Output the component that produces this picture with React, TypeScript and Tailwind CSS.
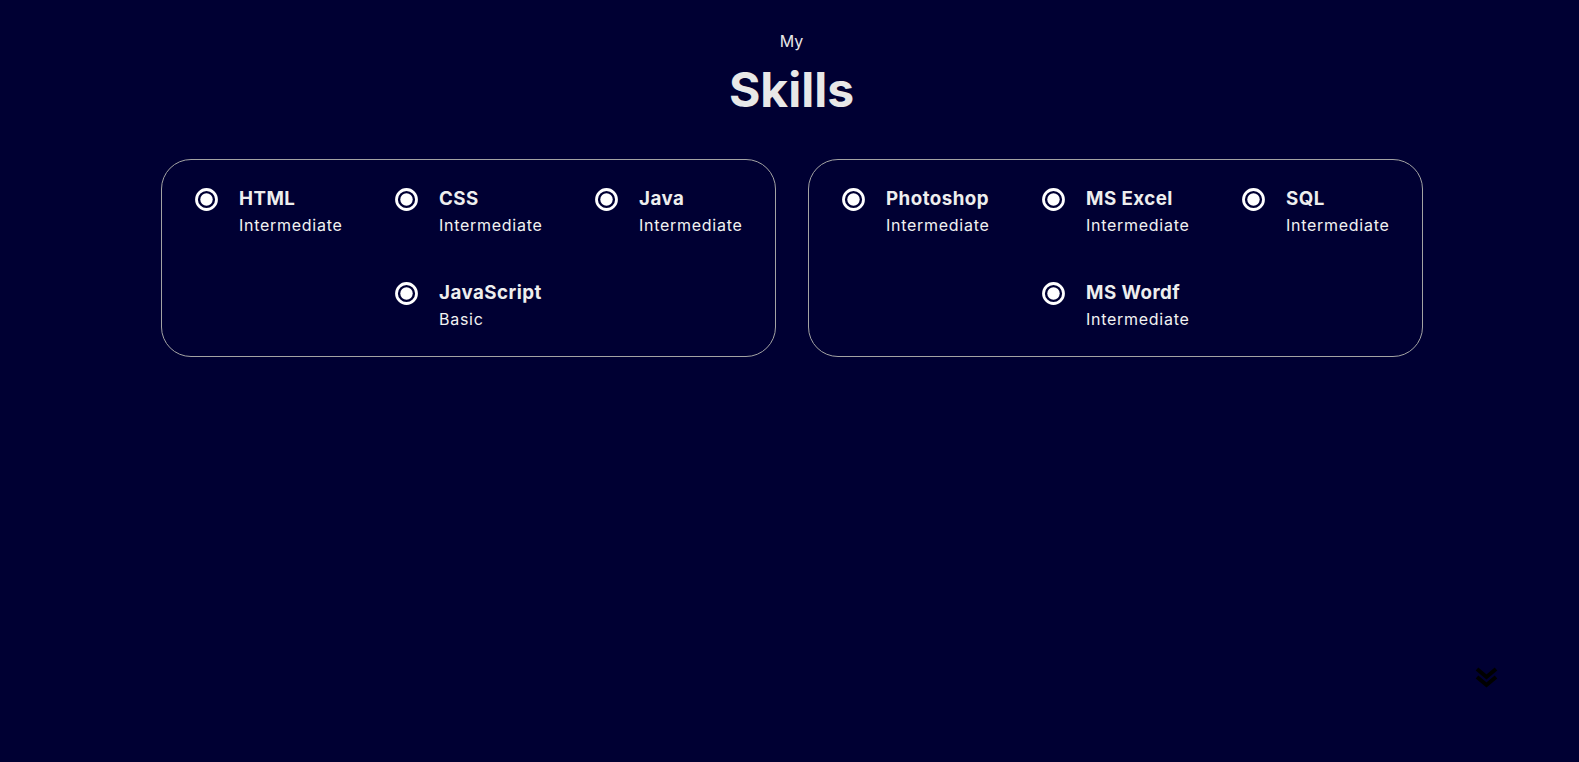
const skillsLeft = [
  { name: 'HTML', level: 'Intermediate' },
  { name: 'CSS', level: 'Intermediate' },
  { name: 'Java', level: 'Intermediate' },
  { name: 'JavaScript', level: 'Basic' },
];

const skillsRight = [
  { name: 'Photoshop', level: 'Intermediate' },
  { name: 'MS Excel', level: 'Intermediate' },
  { name: 'SQL', level: 'Intermediate' },
  { name: 'MS Wordf', level: 'Intermediate' },
];

type Skill = { name: string; level: string };

const RadioIcon = () => (
  <svg width="23" height="23" viewBox="0 0 23 23" className="shrink-0 mt-1">
    <circle cx="11.5" cy="11.5" r="10" fill="none" stroke="#ffffff" strokeWidth="2.8" />
    <circle cx="11.5" cy="11.5" r="6.2" fill="#ffffff" />
  </svg>
);

const SkillItem = ({ skill }: { skill: Skill }) => (
  <article className="flex w-[160px] items-start">
    <div className="ml-[7px]">
      <RadioIcon />
    </div>
    <div className="ml-[21px] whitespace-nowrap">
      <h3 className="mt-[1px] text-[18.72px] leading-[28px] font-bold tracking-[0.025em] text-[#eeeeee]">{skill.name}</h3>
      <p className="text-base leading-[25px] tracking-[0.045em] text-[#f2f2f2]">{skill.level}</p>
    </div>
  </article>
);

const SkillCard = ({ skills }: { skills: Skill[] }) => (
  <div className="w-[615px] rounded-[30px] border border-[#a3a3a3] px-6 pt-6 pb-6">
    <div className="flex flex-wrap justify-center gap-x-10 gap-y-10">
      {skills.map((s) => (
        <SkillItem key={s.name} skill={s} />
      ))}
    </div>
  </div>
);

export default function App() {
  return (
    <section className="relative h-[762px] w-full bg-[#000033] font-['Inter','Open_Sans',sans-serif] text-white">
      <div className="pt-[29px] pl-[4px] text-center">
        <p className="text-base leading-6 text-[#e8e8e8]">My</p>
        <h1 className="mt-[8px] text-5xl leading-[58px] font-bold text-[#e8e8e8]">Skills</h1>
      </div>

      <div className="mt-[40px] flex justify-center gap-8 pl-[4px]">
        <SkillCard skills={skillsLeft} />
        <SkillCard skills={skillsRight} />
      </div>

      <svg
        width="23"
        height="23"
        viewBox="0 0 23 23"
        className="absolute right-[81px] bottom-[73px]"
      >
        <polyline points="2,3 11.5,11 21,3" fill="none" stroke="#000000" strokeWidth="4" />
        <polyline points="2,11 11.5,19 21,11" fill="none" stroke="#000000" strokeWidth="4" />
      </svg>
    </section>
  );
}
